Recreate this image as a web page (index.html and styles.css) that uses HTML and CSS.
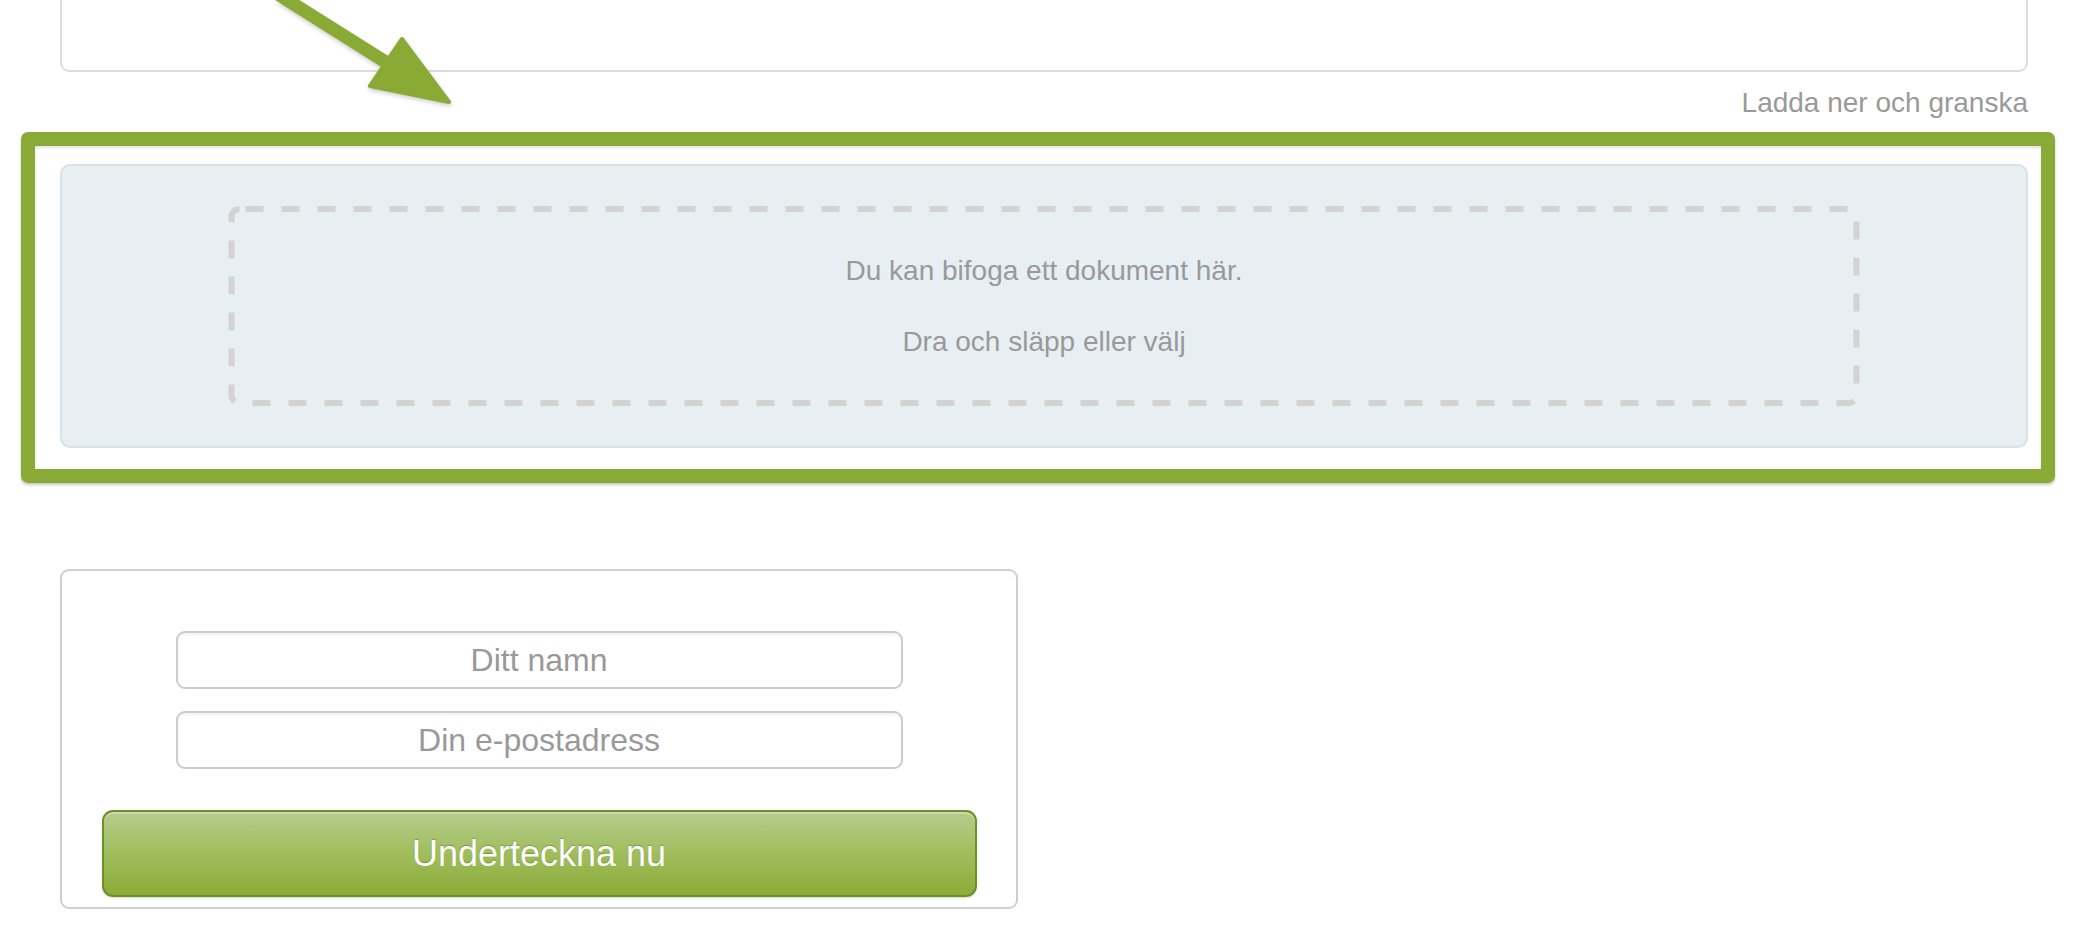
FILE: index.html
```html
<!DOCTYPE html>
<html lang="sv">
<head>
<meta charset="utf-8">
<title>Underteckna</title>
<link rel="stylesheet" href="styles.css">
</head>
<body>
<div class="page">
  <div class="doc-card"></div>
  <div class="download-row"><a class="download-link" href="#">Ladda ner och granska</a></div>
  <div class="highlight">
    <div class="drop-panel">
      <div class="drop-zone">
        <p class="drop-text">Du kan bifoga ett dokument här.</p>
        <p class="drop-text drop-text--second">Dra och släpp eller välj</p>
      </div>
    </div>
  </div>
  <form class="sign-card">
    <input class="field" type="text" placeholder="Ditt namn">
    <input class="field" type="email" placeholder="Din e-postadress">
    <button class="sign-button" type="button">Underteckna nu</button>
  </form>
</div>
<svg class="arrow" width="520" height="140" viewBox="0 0 520 140" aria-hidden="true">
  <line x1="230" y1="-36" x2="392" y2="66" stroke="#89aa34" stroke-width="13" stroke-linecap="butt"/>
  <polygon points="402,39 449,102 370,86" fill="#89aa34" stroke="#89aa34" stroke-width="4" stroke-linejoin="round"/>
</svg>
</body>
</html>
```

FILE: styles.css
```css
* { box-sizing: border-box; }

html, body {
  margin: 0;
  padding: 0;
  background: #ffffff;
}

body {
  position: relative;
  font-family: "Liberation Sans", Arial, Helvetica, sans-serif;
  color: #999999;
  overflow: hidden;
}

.page {
  padding: 0 50px 0 60px;
}

.doc-card {
  height: 72px;
  border: 2px solid #dcdcdc;
  border-top: none;
  border-radius: 0 0 9px 9px;
  background: #ffffff;
}

.download-row {
  margin-top: 15px;
  display: flex;
  justify-content: flex-end;
  height: 32px;
}

.download-link {
  font-size: 28px;
  line-height: 32px;
  color: #999999;
  text-decoration: none;
}

.highlight {
  margin: 13px -27px 0 -39px;
  border: 14px solid #89aa34;
  border-radius: 7px;
  padding: 18px 13px 21px 25px;
  box-shadow: 0 2px 3px rgba(0, 0, 0, 0.22), inset 0 2px 3px rgba(0, 0, 0, 0.12);
}

.drop-panel {
  background: #e8eff3;
  border: 2px solid #d5e3ea;
  border-radius: 10px;
  padding: 40px 166px 40px 166px;
}

.drop-zone {
  height: 200px;
  background-image: url("data:image/svg+xml,%3Csvg xmlns='http://www.w3.org/2000/svg' width='1631' height='200' viewBox='0 0 1631 200'%3E%3Crect x='3' y='3' width='1625' height='194' rx='8' ry='8' fill='none' stroke='%23d3d3d3' stroke-width='6' stroke-dasharray='18 18' stroke-dashoffset='-6'/%3E%3C/svg%3E");
  background-repeat: no-repeat;
  background-size: 100% 100%;
  padding-top: 49px;
  text-align: center;
}

.drop-text {
  margin: 0;
  font-size: 28px;
  line-height: 32px;
  color: #999999;
}

.drop-text--second {
  margin-top: 39px;
}

.sign-card {
  margin: 86px 0 0 0;
  width: 958px;
  height: 340px;
  border: 2px solid #cfcfcf;
  border-radius: 9px;
  padding: 60px 0 0 0;
  display: flex;
  flex-direction: column;
  align-items: center;
}

.field {
  width: 727px;
  height: 58px;
  border: 2px solid #cccccc;
  border-radius: 9px;
  background: #ffffff;
  box-shadow: inset 0 2px 2px rgba(0, 0, 0, 0.05);
  font-family: "Liberation Sans", Arial, Helvetica, sans-serif;
  font-size: 32px;
  color: #555555;
  text-align: center;
  padding: 0 10px;
  outline: none;
}

.field + .field {
  margin-top: 22px;
}

.field::placeholder {
  color: #999999;
  opacity: 1;
}

.sign-button {
  margin-top: 41px;
  width: 875px;
  height: 87px;
  border: 2px solid #6f8f27;
  border-radius: 11px;
  background: linear-gradient(to bottom, #b6cc8d 0%, #a2bf62 45%, #8cab37 100%);
  box-shadow: inset 0 2px 0 rgba(255, 255, 255, 0.3), 0 1px 2px rgba(0, 0, 0, 0.15);
  font-family: "Liberation Sans", Arial, Helvetica, sans-serif;
  font-size: 36px;
  color: #ffffff;
  text-shadow: 0 -1px 1px rgba(60, 80, 10, 0.35);
  cursor: pointer;
}

.arrow {
  position: absolute;
  left: 0;
  top: 0;
  filter: drop-shadow(0 2px 2px rgba(0, 0, 0, 0.2));
  pointer-events: none;
}
```
